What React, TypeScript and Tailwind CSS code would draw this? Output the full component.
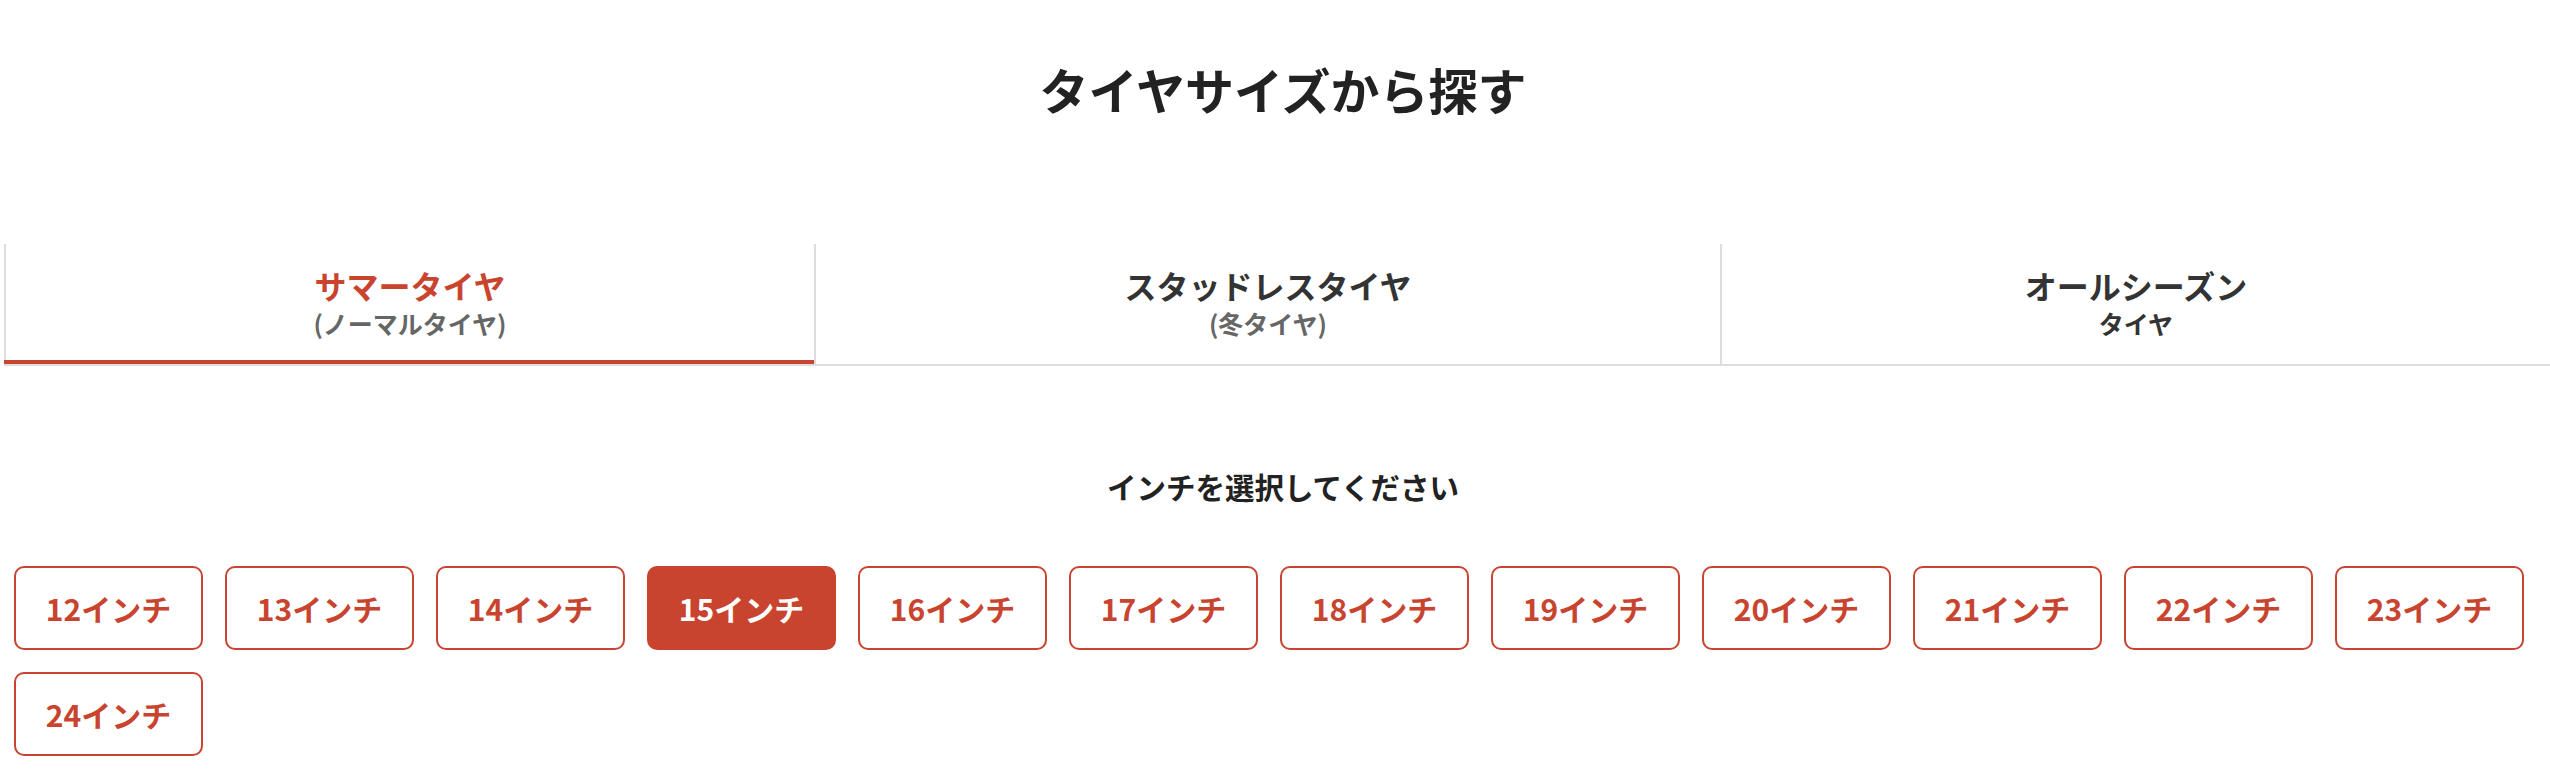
import React from "react";

const sizes = [12, 13, 14, 15, 16, 17, 18, 19, 20, 21, 22, 23, 24];

export default function App() {
  return (
    <div className="w-[2550px] min-h-[774px] bg-white font-['Noto_Sans_CJK_JP','Noto_Sans',sans-serif] overflow-hidden">
      <h2 className="pt-[53px] pl-[16px] text-center text-[49px] leading-[72px] font-bold text-[#222]">
        タイヤサイズから探す
      </h2>

      <div className="mt-[119px] ml-[4px] flex border-b-2 border-[#dddddd]">
        <div className="relative w-[810px] h-[120px] border-l-2 border-[#dddddd] flex flex-col items-center justify-center">
          <div className="text-[32px] leading-[38px] font-bold text-[#c8442f]">サマータイヤ</div>
          <div className="text-[25px] leading-[38px] font-bold text-[#666]">(ノーマルタイヤ)</div>
          <div className="absolute -left-[2px] right-0 bottom-0 h-[4px] bg-[#c8442f]" />
        </div>
        <div className="w-[906px] h-[120px] border-l-2 border-[#dddddd] flex flex-col items-center justify-center">
          <div className="text-[32px] leading-[38px] font-bold text-[#333]">スタッドレスタイヤ</div>
          <div className="text-[25px] leading-[38px] font-bold text-[#666]">(冬タイヤ)</div>
        </div>
        <div className="flex-1 h-[120px] border-l-2 border-[#dddddd] flex flex-col items-center justify-center">
          <div className="text-[32px] leading-[38px] font-bold text-[#333]">オールシーズン</div>
          <div className="text-[25px] leading-[38px] font-bold text-[#333]">タイヤ</div>
        </div>
      </div>

      <p className="mt-[98px] pl-[16px] text-center text-[29.5px] leading-[44px] font-bold text-[#222]">
        インチを選択してください
      </p>

      <div className="mt-[58px] pl-[14px] flex flex-wrap gap-[22px] w-[2550px]">
        {sizes.map((s) => {
          const active = s === 15;
          return (
            <button
              key={s}
              className={
                active
                  ? "w-[189px] h-[84px] rounded-[10px] border-2 border-[#c8442f] bg-[#c8442f] text-white text-[30px] font-bold flex items-center justify-center"
                  : "w-[189px] h-[84px] rounded-[10px] border-2 border-[#c8442f] bg-white text-[#c8442f] text-[30px] font-bold flex items-center justify-center"
              }
            >
              {s}インチ
            </button>
          );
        })}
      </div>
    </div>
  );
}
